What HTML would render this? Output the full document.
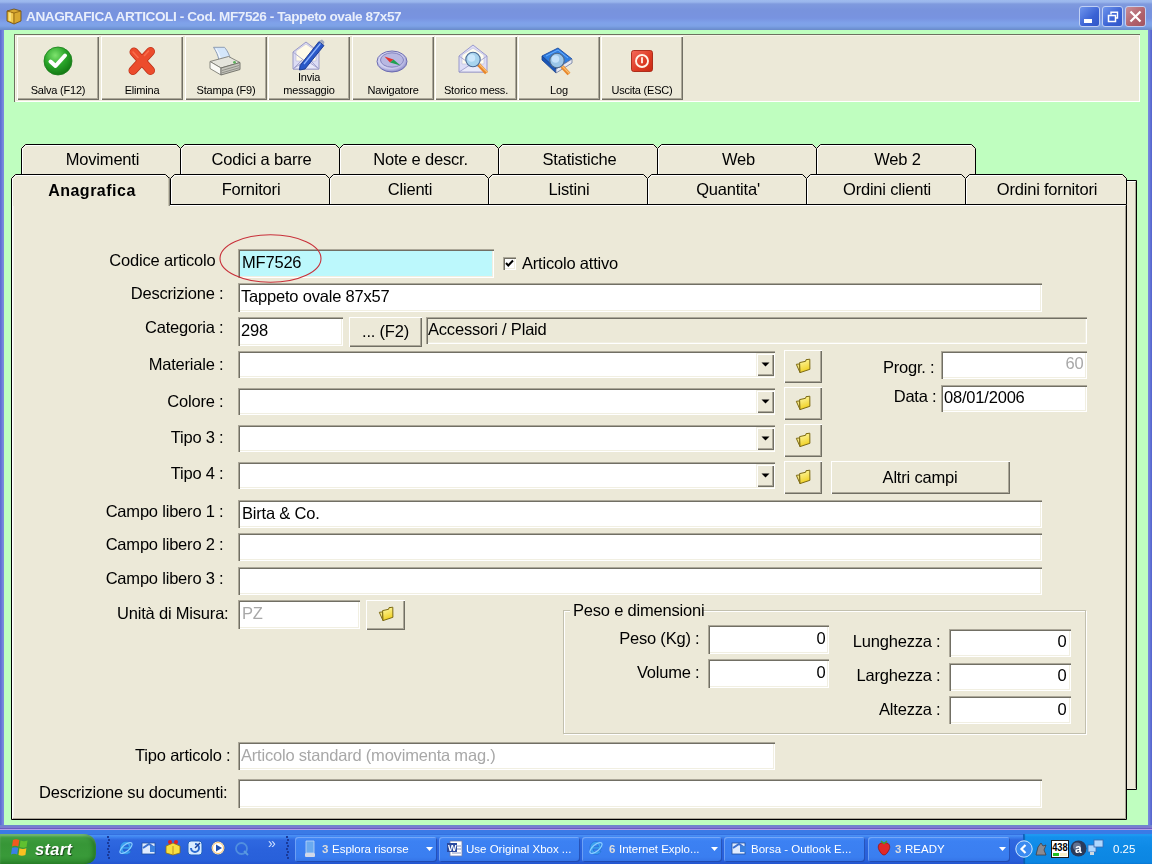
<!DOCTYPE html>
<html><head><meta charset="utf-8">
<style>
*{box-sizing:border-box;margin:0;padding:0}
html,body{width:1152px;height:864px;overflow:hidden;background:#bffebf;font-family:"Liberation Sans",sans-serif;color:#000}
.a{position:absolute}
.t{white-space:nowrap;line-height:20px;height:20px;transform:translateZ(0)}
svg{position:absolute;overflow:visible}
</style></head><body>
<div class="a" style="left:0px;top:0px;width:1152px;height:30px;background:linear-gradient(#9fbbee 0px,#9ab6ec 2px,#7f9ade 4px,#7893dd 10px,#7893e0 18px,#7fa2ea 23px,#7ea2e6 26px,#7196d8 28px,#6a8ac8 30px)"></div>
<svg style="left:4px;top:7px" width="20" height="18" viewBox="0 0 20 18">
<path d="M3 4 L10 2 L17 4 L17 14 L10 17 L3 14 Z" fill="#d8a830" stroke="#6a4a10" stroke-width="0.8"/>
<path d="M3 4 L10 6 L17 4" fill="none" stroke="#8a6010" stroke-width="0.8"/>
<path d="M10 6 L10 17" stroke="#8a6010" stroke-width="0.8"/>
<path d="M4 5 L9 6.5 L9 15.5 L4 13.5Z" fill="#f0c850"/>
<path d="M6 5.5 L6 14" stroke="#fff0a0" stroke-width="1.2"/>
</svg>
<div class="a t" style="left:26px;top:7.29px;font-size:13.6px;color:#e8eefb;font-weight:bold;letter-spacing:-0.42px;">ANAGRAFICA ARTICOLI - Cod. MF7526 - Tappeto ovale 87x57</div>
<div class="a" style="left:1079px;top:6px;width:21px;height:21px;background:linear-gradient(135deg,#6f95ec,#3a62d4 60%,#3157c8);border:1px solid #c0d0f4;border-radius:3px"></div>
<div class="a" style="left:1102px;top:6px;width:21px;height:21px;background:linear-gradient(135deg,#6f95ec,#3a62d4 60%,#3157c8);border:1px solid #c0d0f4;border-radius:3px"></div>
<div class="a" style="left:1125px;top:6px;width:21px;height:21px;background:linear-gradient(135deg,#c98f98,#b0616b 60%,#a25560);border:1px solid #c0d0f4;border-radius:3px"></div>
<div class="a" style="left:1084px;top:19px;width:8px;height:4px;background:#fff"></div>
<svg style="left:1102px;top:6px" width="21" height="21"><rect x="6.5" y="9.5" width="7" height="6" fill="none" stroke="#fff" stroke-width="1.5"/><path d="M9 8.5 V6.2 H15.5 V12 H14" fill="none" stroke="#fff" stroke-width="1.4"/></svg>
<svg style="left:1125px;top:6px" width="21" height="21"><path d="M5.5 5.5 L15.5 15.5 M15.5 5.5 L5.5 15.5" stroke="#fff" stroke-width="2.2"/></svg>
<div class="a" style="left:0px;top:30px;width:4px;height:800px;background:linear-gradient(90deg,#5868cf,#6b7cd9 2px,#7a8ade 3px)"></div>
<div class="a" style="left:1148px;top:30px;width:4px;height:800px;background:linear-gradient(90deg,#7a8ade,#6b7cd9 2px,#5868cf 3px)"></div>
<div class="a" style="left:0px;top:825px;width:1152px;height:5px;background:linear-gradient(#6c88cc 0px,#6c88cc 1px,#7c7cd0 1px,#7c7cd0 3px,#6a5cc0 3px,#6a5cc0 4px,#b0a0e8 4px)"></div>
<div class="a" style="left:14px;top:34px;width:1126px;height:68px;background:#ece9d8;box-shadow:inset 1px 1px 0 #6e7060,inset 2px 2px 0 #f6f4e6,inset -1px -1px 0 #fff"></div>
<div class="a" style="left:17px;top:36px;width:82px;height:64px;background:#ece9d8;box-shadow:inset 1px 1px 0 #fff,inset -1px -1px 0 #716f64,inset -2px -2px 0 #aca899"></div>
<div class="a t" style="left:-142px;width:400px;text-align:center;top:80.19px;font-size:11px;color:#000;font-weight:normal;letter-spacing:-0.2px;">Salva (F12)</div>
<div class="a" style="left:101px;top:36px;width:82px;height:64px;background:#ece9d8;box-shadow:inset 1px 1px 0 #fff,inset -1px -1px 0 #716f64,inset -2px -2px 0 #aca899"></div>
<div class="a t" style="left:-58px;width:400px;text-align:center;top:80.19px;font-size:11px;color:#000;font-weight:normal;letter-spacing:-0.2px;">Elimina</div>
<div class="a" style="left:185px;top:36px;width:82px;height:64px;background:#ece9d8;box-shadow:inset 1px 1px 0 #fff,inset -1px -1px 0 #716f64,inset -2px -2px 0 #aca899"></div>
<div class="a t" style="left:26px;width:400px;text-align:center;top:80.19px;font-size:11px;color:#000;font-weight:normal;letter-spacing:-0.2px;">Stampa (F9)</div>
<div class="a" style="left:268px;top:36px;width:82px;height:64px;background:#ece9d8;box-shadow:inset 1px 1px 0 #fff,inset -1px -1px 0 #716f64,inset -2px -2px 0 #aca899"></div>
<div class="a t" style="left:109px;width:400px;text-align:center;top:67.19px;font-size:11px;color:#000;font-weight:normal;letter-spacing:-0.2px;">Invia</div>
<div class="a t" style="left:109px;width:400px;text-align:center;top:80.19px;font-size:11px;color:#000;font-weight:normal;letter-spacing:-0.2px;">messaggio</div>
<div class="a" style="left:352px;top:36px;width:82px;height:64px;background:#ece9d8;box-shadow:inset 1px 1px 0 #fff,inset -1px -1px 0 #716f64,inset -2px -2px 0 #aca899"></div>
<div class="a t" style="left:193px;width:400px;text-align:center;top:80.19px;font-size:11px;color:#000;font-weight:normal;letter-spacing:-0.2px;">Navigatore</div>
<div class="a" style="left:435px;top:36px;width:82px;height:64px;background:#ece9d8;box-shadow:inset 1px 1px 0 #fff,inset -1px -1px 0 #716f64,inset -2px -2px 0 #aca899"></div>
<div class="a t" style="left:276px;width:400px;text-align:center;top:80.19px;font-size:11px;color:#000;font-weight:normal;letter-spacing:-0.2px;">Storico mess.</div>
<div class="a" style="left:518px;top:36px;width:82px;height:64px;background:#ece9d8;box-shadow:inset 1px 1px 0 #fff,inset -1px -1px 0 #716f64,inset -2px -2px 0 #aca899"></div>
<div class="a t" style="left:359px;width:400px;text-align:center;top:80.19px;font-size:11px;color:#000;font-weight:normal;letter-spacing:-0.2px;">Log</div>
<div class="a" style="left:601px;top:36px;width:82px;height:64px;background:#ece9d8;box-shadow:inset 1px 1px 0 #fff,inset -1px -1px 0 #716f64,inset -2px -2px 0 #aca899"></div>
<div class="a t" style="left:442px;width:400px;text-align:center;top:80.19px;font-size:11px;color:#000;font-weight:normal;letter-spacing:-0.2px;">Uscita (ESC)</div>
<svg style="left:43px;top:46px" width="30" height="30" viewBox="0 0 30 30">
<defs><radialGradient id="gg" cx="40%" cy="30%" r="70%"><stop offset="0" stop-color="#7ee36e"/><stop offset="0.55" stop-color="#2aa52a"/><stop offset="1" stop-color="#137a13"/></radialGradient></defs>
<circle cx="15" cy="15" r="14" fill="url(#gg)" stroke="#1b7d1b" stroke-width="0.8"/>
<path d="M7.5 15.5 L12.5 20 L22 9.5" fill="none" stroke="#fff" stroke-width="4" stroke-linejoin="round" stroke-linecap="round"/>
</svg>
<svg style="left:127px;top:46px" width="30" height="30" viewBox="0 0 30 30">
<path d="M7 6 L23.5 24.5 M23.5 5.5 L6 24.5" stroke="#b83018" stroke-width="9" stroke-linecap="round"/>
<path d="M7 6 L23.5 24.5 M23.5 5.5 L6 24.5" stroke="#ec4c2c" stroke-width="7.6" stroke-linecap="round"/>
<path d="M6 6 L11 11.5 M21.5 5 L17.5 9.5" stroke="#ff7a58" stroke-width="1.6" stroke-linecap="round" opacity="0.7"/>
</svg>
<svg style="left:209px;top:46px" width="32" height="30" viewBox="0 0 32 30">
<path d="M4.5 1.3 L15.5 1.3 C17 3 19 6 20.5 10 L21.5 13 L10 14.5 C9 9 7 5 4.5 1.3Z" fill="#d4e6fa" stroke="#8494ae" stroke-width="0.9"/>
<path d="M7 3 C9 6 10.5 9 11.5 13" fill="none" stroke="#f4f8ff" stroke-width="1.2"/>
<path d="M1 15.5 L19.5 10.5 L31 16.5 L12 22Z" fill="#e4e4dc" stroke="#7c7c74" stroke-width="0.9" stroke-linejoin="round"/>
<path d="M1 15.5 L12 22 L12 29 L1 22.5Z" fill="#fafaf6" stroke="#7c7c74" stroke-width="0.9" stroke-linejoin="round"/>
<path d="M12 22 L31 16.5 L31 23.5 L12 29Z" fill="#c4c4bc" stroke="#6c6c64" stroke-width="0.9" stroke-linejoin="round"/>
<path d="M13 24.5 L30 19.5 M13 26.8 L30 21.8" stroke="#8a8a82" stroke-width="0.9"/>
<circle cx="25.5" cy="16.3" r="1.4" fill="#5cb05c"/>
</svg>
<svg style="left:292px;top:39px" width="33" height="32" viewBox="0 0 33 32">
<path d="M1 13 L14 3 L27 13 L27 30 L1 30Z" fill="#dcdcf4" stroke="#9090c0" stroke-width="0.9"/>
<path d="M4 12 L14 5 L24 12 L24 22 L4 22Z" fill="#fffbe8" stroke="#b8b8d8" stroke-width="0.6"/>
<path d="M1 13 L14 23 L27 13 M1 30 L11 20 M27 30 L17 20" fill="none" stroke="#a0a0cc" stroke-width="0.9"/>
<path d="M1 30 L14 21 L27 30Z" fill="#e8e8f8" stroke="#9898c8" stroke-width="0.8"/>
<path d="M8 26.5 L27 2.5 L32 6.5 L13 30 L7.5 31Z" fill="#2a58c8" stroke="#17368a" stroke-width="0.9"/>
<path d="M12 25 L28.5 4.5" stroke="#8fb6ff" stroke-width="1.2"/>
<path d="M27 2 L30 0.5 L32.5 3 L31.5 5.5Z" fill="#a0a8c0"/>
</svg>
<svg style="left:376px;top:49px" width="32" height="24" viewBox="0 0 32 24">
<defs><radialGradient id="cg" cx="45%" cy="40%" r="60%"><stop offset="0" stop-color="#f4f4ff"/><stop offset="0.7" stop-color="#cfcff0"/><stop offset="1" stop-color="#8a8ac8"/></radialGradient></defs>
<ellipse cx="16" cy="12.5" rx="15" ry="10.5" fill="url(#cg)" stroke="#6c6cb0" stroke-width="1"/>
<ellipse cx="16" cy="11" rx="11.5" ry="7.2" fill="#b8b8e2" stroke="#7a7ab8" stroke-width="0.9"/>
<path d="M8.5 7.5 L17.5 10.5 L14 13.5Z" fill="#e8302a"/>
<path d="M17.5 10.5 L24.5 16.5 L14 13.5Z" fill="#20a050"/>
</svg>
<svg style="left:458px;top:44px" width="34" height="33" viewBox="0 0 34 33">
<path d="M1 12 L15 1 L29 12 L29 28 L1 28Z" fill="#dedef6" stroke="#9090c8" stroke-width="0.9"/>
<path d="M4 11 L15 4 L26 11 L26 20 L4 20Z" fill="#fffdf0" stroke="#b8b8d8" stroke-width="0.6"/>
<path d="M1 12 L15 22 L29 12" fill="none" stroke="#a0a0cc" stroke-width="0.9"/>
<path d="M1 28 L15 19 L29 28Z" fill="#eaeaf8" stroke="#9898c8" stroke-width="0.8"/>
<path d="M20.5 20.5 L28.5 29" stroke="#e8862a" stroke-width="4" stroke-linecap="butt"/>
<path d="M21 20 L29.5 28.5" stroke="#f8c070" stroke-width="1.3"/>
<circle cx="15" cy="15.5" r="7.2" fill="#a8d4ee" stroke="#4a6a94" stroke-width="1.1"/>
<circle cx="13.5" cy="14" r="3.8" fill="#d4ecff" opacity="0.8"/>
</svg>
<svg style="left:541px;top:47px" width="36" height="30" viewBox="0 0 36 30">
<path d="M1 9 L17 1 L31 12 L15 22Z" fill="#2e7de0" stroke="#1a4aa0" stroke-width="0.9"/>
<path d="M1 9 L1 13 L15 26 L15 22Z" fill="#1a56b8" stroke="#16408a" stroke-width="0.8"/>
<path d="M15 22 L31 12 L31 16 L15 26Z" fill="#e8e8f0" stroke="#6a7aa0" stroke-width="0.8"/>
<path d="M5 9 L17 3 L27 11" fill="none" stroke="#6ab0ff" stroke-width="1"/>
<path d="M21 19.5 L28 27" stroke="#e8862a" stroke-width="4" stroke-linecap="butt"/>
<path d="M21 19 L28.5 26.5" stroke="#f8c070" stroke-width="1.2"/>
<circle cx="16" cy="13.5" r="7.2" fill="#9cc6e8" stroke="#506a8a" stroke-width="1.1"/>
<circle cx="14.5" cy="12" r="3.8" fill="#d0e8ff" opacity="0.8"/>
</svg>
<svg style="left:631px;top:50px" width="22" height="22" viewBox="0 0 22 22">
<defs><linearGradient id="rg" x1="0" y1="0" x2="1" y2="1"><stop offset="0" stop-color="#f46a5a"/><stop offset="0.6" stop-color="#dc3a22"/><stop offset="1" stop-color="#c82a14"/></linearGradient></defs>
<rect x="0.5" y="0.5" width="21" height="21" rx="2.2" fill="url(#rg)" stroke="#a82412" stroke-width="0.9"/>
<circle cx="11" cy="11" r="6" fill="none" stroke="#fff4e8" stroke-width="1.9"/>
<path d="M11 7.3 V13.3" stroke="#fff4e8" stroke-width="1.8"/>
</svg>
<svg style="left:0;top:0" width="1152" height="864" viewBox="0 0 1152 864"><rect x="1126" y="180" width="11" height="610" fill="#ece9d8"/><path d="M1126 180.5 H1136.5 V789.5 H1126" fill="none" stroke="#000"/><path d="M1127 181.5 H1135" stroke="#fff"/><path d="M1135.5 182 V788" stroke="#aca899"/><path d="M21 180 L21 148 L25 144 L177 144 L181 148 L181 180Z" fill="#ece9d8"/><path d="M21.5 180 L21.5 148.5 L25.5 144.5 L176.5 144.5 L180.5 148.5 L180.5 180" fill="none" stroke="#000" stroke-width="1"/><path d="M22.5 180 L22.5 149 L26 145.5 L176 145.5" fill="none" stroke="#fff" stroke-width="1"/><path d="M180 180 L180 148 L184 144 L336 144 L340 148 L340 180Z" fill="#ece9d8"/><path d="M180.5 180 L180.5 148.5 L184.5 144.5 L335.5 144.5 L339.5 148.5 L339.5 180" fill="none" stroke="#000" stroke-width="1"/><path d="M181.5 180 L181.5 149 L185 145.5 L335 145.5" fill="none" stroke="#fff" stroke-width="1"/><path d="M339 180 L339 148 L343 144 L495 144 L499 148 L499 180Z" fill="#ece9d8"/><path d="M339.5 180 L339.5 148.5 L343.5 144.5 L494.5 144.5 L498.5 148.5 L498.5 180" fill="none" stroke="#000" stroke-width="1"/><path d="M340.5 180 L340.5 149 L344 145.5 L494 145.5" fill="none" stroke="#fff" stroke-width="1"/><path d="M498 180 L498 148 L502 144 L654 144 L658 148 L658 180Z" fill="#ece9d8"/><path d="M498.5 180 L498.5 148.5 L502.5 144.5 L653.5 144.5 L657.5 148.5 L657.5 180" fill="none" stroke="#000" stroke-width="1"/><path d="M499.5 180 L499.5 149 L503 145.5 L653 145.5" fill="none" stroke="#fff" stroke-width="1"/><path d="M657 180 L657 148 L661 144 L813 144 L817 148 L817 180Z" fill="#ece9d8"/><path d="M657.5 180 L657.5 148.5 L661.5 144.5 L812.5 144.5 L816.5 148.5 L816.5 180" fill="none" stroke="#000" stroke-width="1"/><path d="M658.5 180 L658.5 149 L662 145.5 L812 145.5" fill="none" stroke="#fff" stroke-width="1"/><path d="M816 180 L816 148 L820 144 L972 144 L976 148 L976 180Z" fill="#ece9d8"/><path d="M816.5 180 L816.5 148.5 L820.5 144.5 L971.5 144.5 L975.5 148.5 L975.5 180" fill="none" stroke="#000" stroke-width="1"/><path d="M817.5 180 L817.5 149 L821 145.5 L971 145.5" fill="none" stroke="#fff" stroke-width="1"/><path d="M170 205 L170 178 L174 174 L326 174 L330 178 L330 205Z" fill="#ece9d8"/><path d="M170.5 205 L170.5 178.5 L174.5 174.5 L325.5 174.5 L329.5 178.5 L329.5 205" fill="none" stroke="#000" stroke-width="1"/><path d="M171.5 205 L171.5 179 L175 175.5 L325 175.5" fill="none" stroke="#fff" stroke-width="1"/><path d="M329 205 L329 178 L333 174 L485 174 L489 178 L489 205Z" fill="#ece9d8"/><path d="M329.5 205 L329.5 178.5 L333.5 174.5 L484.5 174.5 L488.5 178.5 L488.5 205" fill="none" stroke="#000" stroke-width="1"/><path d="M330.5 205 L330.5 179 L334 175.5 L484 175.5" fill="none" stroke="#fff" stroke-width="1"/><path d="M488 205 L488 178 L492 174 L644 174 L648 178 L648 205Z" fill="#ece9d8"/><path d="M488.5 205 L488.5 178.5 L492.5 174.5 L643.5 174.5 L647.5 178.5 L647.5 205" fill="none" stroke="#000" stroke-width="1"/><path d="M489.5 205 L489.5 179 L493 175.5 L643 175.5" fill="none" stroke="#fff" stroke-width="1"/><path d="M647 205 L647 178 L651 174 L803 174 L807 178 L807 205Z" fill="#ece9d8"/><path d="M647.5 205 L647.5 178.5 L651.5 174.5 L802.5 174.5 L806.5 178.5 L806.5 205" fill="none" stroke="#000" stroke-width="1"/><path d="M648.5 205 L648.5 179 L652 175.5 L802 175.5" fill="none" stroke="#fff" stroke-width="1"/><path d="M806 205 L806 178 L810 174 L962 174 L966 178 L966 205Z" fill="#ece9d8"/><path d="M806.5 205 L806.5 178.5 L810.5 174.5 L961.5 174.5 L965.5 178.5 L965.5 205" fill="none" stroke="#000" stroke-width="1"/><path d="M807.5 205 L807.5 179 L811 175.5 L961 175.5" fill="none" stroke="#fff" stroke-width="1"/><path d="M965 205 L965 178 L969 174 L1123 174 L1127 178 L1127 205Z" fill="#ece9d8"/><path d="M965.5 205 L965.5 178.5 L969.5 174.5 L1122.5 174.5 L1126.5 178.5 L1126.5 205" fill="none" stroke="#000" stroke-width="1"/><path d="M966.5 205 L966.5 179 L970 175.5 L1122 175.5" fill="none" stroke="#fff" stroke-width="1"/><rect x="11" y="204" width="1116" height="616" fill="#ece9d8"/><path d="M11.5 204 V819.5 H1126.5 V204.5 H170" fill="none" stroke="#000"/><path d="M12.5 205 V818 M170 205.5 H1125" stroke="#fff"/><path d="M13.5 206 V817" stroke="#f6f4ec"/><path d="M1125.5 206 V818.5 H13" fill="none" stroke="#aca899"/><path d="M11 206 L11 178 L15 174 L166 174 L170 178 L170 206Z" fill="#ece9d8"/><path d="M11.5 206 L11.5 178.5 L15.5 174.5 L165.5 174.5 L169.5 178.5" fill="none" stroke="#000"/><path d="M12.5 206 L12.5 179 L16 175.5 L165 175.5" fill="none" stroke="#fff"/><path d="M168.5 178 L168.5 206" fill="none" stroke="#c8c4b0"/><path d="M169.5 177 L169.5 206" fill="none" stroke="#8a887c"/></svg>
<div class="a t" style="left:-97.5px;width:400px;text-align:center;top:149.28px;font-size:16.5px;color:#000;font-weight:normal;letter-spacing:-0.2px;">Movimenti</div>
<div class="a t" style="left:61.5px;width:400px;text-align:center;top:149.28px;font-size:16.5px;color:#000;font-weight:normal;letter-spacing:-0.2px;">Codici a barre</div>
<div class="a t" style="left:220.5px;width:400px;text-align:center;top:149.28px;font-size:16.5px;color:#000;font-weight:normal;letter-spacing:-0.2px;">Note e descr.</div>
<div class="a t" style="left:379.5px;width:400px;text-align:center;top:149.28px;font-size:16.5px;color:#000;font-weight:normal;letter-spacing:-0.2px;">Statistiche</div>
<div class="a t" style="left:538.5px;width:400px;text-align:center;top:149.28px;font-size:16.5px;color:#000;font-weight:normal;letter-spacing:-0.2px;">Web</div>
<div class="a t" style="left:697.5px;width:400px;text-align:center;top:149.28px;font-size:16.5px;color:#000;font-weight:normal;letter-spacing:-0.2px;">Web 2</div>
<div class="a t" style="left:-108.0px;width:400px;text-align:center;top:181.46px;font-size:16px;color:#000;font-weight:bold;letter-spacing:0.5px;">Anagrafica</div>
<div class="a t" style="left:51.0px;width:400px;text-align:center;top:179.28px;font-size:16.5px;color:#000;font-weight:normal;letter-spacing:-0.2px;">Fornitori</div>
<div class="a t" style="left:210.0px;width:400px;text-align:center;top:179.28px;font-size:16.5px;color:#000;font-weight:normal;letter-spacing:-0.2px;">Clienti</div>
<div class="a t" style="left:369.0px;width:400px;text-align:center;top:179.28px;font-size:16.5px;color:#000;font-weight:normal;letter-spacing:-0.2px;">Listini</div>
<div class="a t" style="left:528.0px;width:400px;text-align:center;top:179.28px;font-size:16.5px;color:#000;font-weight:normal;letter-spacing:-0.2px;">Quantita'</div>
<div class="a t" style="left:687.0px;width:400px;text-align:center;top:179.28px;font-size:16.5px;color:#000;font-weight:normal;letter-spacing:-0.2px;">Ordini clienti</div>
<div class="a t" style="left:847.0px;width:400px;text-align:center;top:179.28px;font-size:16.5px;color:#000;font-weight:normal;letter-spacing:-0.2px;">Ordini fornitori</div>
<div class="a t" style="right:936.5px;top:250.28px;font-size:16.5px;color:#000;font-weight:normal;letter-spacing:-0.2px;">Codice articolo</div>
<div class="a" style="left:238px;top:249px;width:256px;height:29px;background:#bcf8fc;box-shadow:inset 1px 1px 0 #aca899,inset 2px 2px 0 #716f64,inset -1px -1px 0 #fff,inset -2px -2px 0 #f1efe2;"></div>
<div class="a t" style="left:242px;top:252.28px;font-size:16.5px;color:#000;font-weight:normal;letter-spacing:-0.2px;">MF7526</div>
<svg style="left:218px;top:232px" width="106" height="54"><ellipse cx="52.5" cy="26.5" rx="50.5" ry="23.8" fill="none" stroke="#c8303a" stroke-width="1.1"/></svg>
<div class="a" style="left:503px;top:257px;width:13px;height:13px;background:#fff;box-shadow:inset 1px 1px 0 #aca899,inset 2px 2px 0 #716f64,inset -1px -1px 0 #fff,inset -2px -2px 0 #f1efe2"></div>
<svg style="left:503px;top:257px" width="13" height="13"><path d="M3 6 L5.3 8.5 L10 3.5" fill="none" stroke="#000" stroke-width="2"/></svg>
<div class="a t" style="left:522px;top:253.28px;font-size:16.5px;color:#000;font-weight:normal;letter-spacing:-0.2px;">Articolo attivo</div>
<div class="a t" style="right:928.5px;top:283.28px;font-size:16.5px;color:#000;font-weight:normal;letter-spacing:-0.2px;">Descrizione :</div>
<div class="a" style="left:238px;top:283px;width:804px;height:29px;background:#fff;box-shadow:inset 1px 1px 0 #aca899,inset 2px 2px 0 #716f64,inset -1px -1px 0 #fff,inset -2px -2px 0 #f1efe2;"></div>
<div class="a t" style="left:241px;top:286.28px;font-size:16.5px;color:#000;font-weight:normal;letter-spacing:-0.2px;">Tappeto ovale 87x57</div>
<div class="a t" style="right:928.5px;top:317.28px;font-size:16.5px;color:#000;font-weight:normal;letter-spacing:-0.2px;">Categoria :</div>
<div class="a" style="left:238px;top:317px;width:105px;height:29px;background:#fff;box-shadow:inset 1px 1px 0 #aca899,inset 2px 2px 0 #716f64,inset -1px -1px 0 #fff,inset -2px -2px 0 #f1efe2;"></div>
<div class="a t" style="left:241px;top:320.28px;font-size:16.5px;color:#000;font-weight:normal;letter-spacing:-0.2px;">298</div>
<div class="a" style="left:349px;top:317px;width:73px;height:30px;background:#ece9d8;box-shadow:inset 1px 1px 0 #fff,inset -1px -1px 0 #716f64,inset -2px -2px 0 #aca899"></div>
<div class="a t" style="left:185.5px;width:400px;text-align:center;top:321.28px;font-size:16.5px;color:#000;font-weight:normal;letter-spacing:-0.2px;">... (F2)</div>
<div class="a" style="left:426px;top:317px;width:661px;height:27px;background:#ece9d8;box-shadow:inset 1px 1px 0 #aca899,inset 2px 2px 0 #716f64,inset -1px -1px 0 #fff,inset -2px -2px 0 #f1efe2;"></div>
<div class="a t" style="left:428px;top:319.28px;font-size:16.5px;color:#000;font-weight:normal;letter-spacing:-0.2px;">Accessori / Plaid</div>
<div class="a t" style="right:928.5px;top:354.28px;font-size:16.5px;color:#000;font-weight:normal;letter-spacing:-0.2px;">Materiale :</div>
<div class="a" style="left:238px;top:351px;width:537px;height:27px;background:#fff;box-shadow:inset 1px 1px 0 #aca899,inset 2px 2px 0 #716f64,inset -1px -1px 0 #fff,inset -2px -2px 0 #f1efe2;"></div>
<div class="a" style="left:756px;top:353px;width:18px;height:23px;background:#ece9d8;box-shadow:inset 1px 1px 0 #f1efe2,inset 2px 2px 0 #fff,inset -1px -1px 0 #716f64,inset -2px -2px 0 #aca899"></div>
<svg style="left:760.5px;top:362.0px" width="9" height="5"><path d="M0.5 0.5 H8.5 L4.5 4.5Z" fill="#000"/></svg>
<div class="a" style="left:784px;top:350px;width:38px;height:33px;background:#ece9d8;box-shadow:inset 1px 1px 0 #fff,inset -1px -1px 0 #716f64,inset -2px -2px 0 #aca899"></div>
<svg style="left:792.0px;top:354.5px" width="22" height="22" viewBox="0 0 22 22">
<defs><linearGradient id="fy" x1="0" y1="0" x2="0.3" y2="1"><stop offset="0" stop-color="#fffbb0"/><stop offset="1" stop-color="#f0d020"/></linearGradient></defs>
<path d="M4.3 9.3 L7.6 8.9 L8 17.6 Z" fill="#f4e680" stroke="#7d6a12" stroke-width="1"/>
<path d="M7.6 7.6 L13.6 6.3 L14 4.7 L17.8 4.2 L17.9 14.3 L8 17.6 Z" fill="url(#fy)" stroke="#7d6a12" stroke-width="1"/>
</svg>
<div class="a t" style="right:928.5px;top:391.28px;font-size:16.5px;color:#000;font-weight:normal;letter-spacing:-0.2px;">Colore :</div>
<div class="a" style="left:238px;top:388px;width:537px;height:27px;background:#fff;box-shadow:inset 1px 1px 0 #aca899,inset 2px 2px 0 #716f64,inset -1px -1px 0 #fff,inset -2px -2px 0 #f1efe2;"></div>
<div class="a" style="left:756px;top:390px;width:18px;height:23px;background:#ece9d8;box-shadow:inset 1px 1px 0 #f1efe2,inset 2px 2px 0 #fff,inset -1px -1px 0 #716f64,inset -2px -2px 0 #aca899"></div>
<svg style="left:760.5px;top:399.0px" width="9" height="5"><path d="M0.5 0.5 H8.5 L4.5 4.5Z" fill="#000"/></svg>
<div class="a" style="left:784px;top:387px;width:38px;height:33px;background:#ece9d8;box-shadow:inset 1px 1px 0 #fff,inset -1px -1px 0 #716f64,inset -2px -2px 0 #aca899"></div>
<svg style="left:792.0px;top:391.5px" width="22" height="22" viewBox="0 0 22 22">
<defs><linearGradient id="fy" x1="0" y1="0" x2="0.3" y2="1"><stop offset="0" stop-color="#fffbb0"/><stop offset="1" stop-color="#f0d020"/></linearGradient></defs>
<path d="M4.3 9.3 L7.6 8.9 L8 17.6 Z" fill="#f4e680" stroke="#7d6a12" stroke-width="1"/>
<path d="M7.6 7.6 L13.6 6.3 L14 4.7 L17.8 4.2 L17.9 14.3 L8 17.6 Z" fill="url(#fy)" stroke="#7d6a12" stroke-width="1"/>
</svg>
<div class="a t" style="right:928.5px;top:427.28px;font-size:16.5px;color:#000;font-weight:normal;letter-spacing:-0.2px;">Tipo 3 :</div>
<div class="a" style="left:238px;top:425px;width:537px;height:27px;background:#fff;box-shadow:inset 1px 1px 0 #aca899,inset 2px 2px 0 #716f64,inset -1px -1px 0 #fff,inset -2px -2px 0 #f1efe2;"></div>
<div class="a" style="left:756px;top:427px;width:18px;height:23px;background:#ece9d8;box-shadow:inset 1px 1px 0 #f1efe2,inset 2px 2px 0 #fff,inset -1px -1px 0 #716f64,inset -2px -2px 0 #aca899"></div>
<svg style="left:760.5px;top:436.0px" width="9" height="5"><path d="M0.5 0.5 H8.5 L4.5 4.5Z" fill="#000"/></svg>
<div class="a" style="left:784px;top:424px;width:38px;height:33px;background:#ece9d8;box-shadow:inset 1px 1px 0 #fff,inset -1px -1px 0 #716f64,inset -2px -2px 0 #aca899"></div>
<svg style="left:792.0px;top:428.5px" width="22" height="22" viewBox="0 0 22 22">
<defs><linearGradient id="fy" x1="0" y1="0" x2="0.3" y2="1"><stop offset="0" stop-color="#fffbb0"/><stop offset="1" stop-color="#f0d020"/></linearGradient></defs>
<path d="M4.3 9.3 L7.6 8.9 L8 17.6 Z" fill="#f4e680" stroke="#7d6a12" stroke-width="1"/>
<path d="M7.6 7.6 L13.6 6.3 L14 4.7 L17.8 4.2 L17.9 14.3 L8 17.6 Z" fill="url(#fy)" stroke="#7d6a12" stroke-width="1"/>
</svg>
<div class="a t" style="right:928.5px;top:463.28px;font-size:16.5px;color:#000;font-weight:normal;letter-spacing:-0.2px;">Tipo 4 :</div>
<div class="a" style="left:238px;top:462px;width:537px;height:27px;background:#fff;box-shadow:inset 1px 1px 0 #aca899,inset 2px 2px 0 #716f64,inset -1px -1px 0 #fff,inset -2px -2px 0 #f1efe2;"></div>
<div class="a" style="left:756px;top:464px;width:18px;height:23px;background:#ece9d8;box-shadow:inset 1px 1px 0 #f1efe2,inset 2px 2px 0 #fff,inset -1px -1px 0 #716f64,inset -2px -2px 0 #aca899"></div>
<svg style="left:760.5px;top:473.0px" width="9" height="5"><path d="M0.5 0.5 H8.5 L4.5 4.5Z" fill="#000"/></svg>
<div class="a" style="left:784px;top:461px;width:38px;height:33px;background:#ece9d8;box-shadow:inset 1px 1px 0 #fff,inset -1px -1px 0 #716f64,inset -2px -2px 0 #aca899"></div>
<svg style="left:792.0px;top:465.5px" width="22" height="22" viewBox="0 0 22 22">
<defs><linearGradient id="fy" x1="0" y1="0" x2="0.3" y2="1"><stop offset="0" stop-color="#fffbb0"/><stop offset="1" stop-color="#f0d020"/></linearGradient></defs>
<path d="M4.3 9.3 L7.6 8.9 L8 17.6 Z" fill="#f4e680" stroke="#7d6a12" stroke-width="1"/>
<path d="M7.6 7.6 L13.6 6.3 L14 4.7 L17.8 4.2 L17.9 14.3 L8 17.6 Z" fill="url(#fy)" stroke="#7d6a12" stroke-width="1"/>
</svg>
<div class="a t" style="right:217.5px;top:357.28px;font-size:16.5px;color:#000;font-weight:normal;letter-spacing:-0.2px;">Progr. :</div>
<div class="a" style="left:941px;top:351px;width:146px;height:28px;background:#fff;box-shadow:inset 1px 1px 0 #aca899,inset 2px 2px 0 #716f64,inset -1px -1px 0 #fff,inset -2px -2px 0 #f1efe2;"></div>
<div class="a t" style="right:68.5px;top:353.28px;font-size:16.5px;color:#a8a8a8;font-weight:normal;letter-spacing:-0.2px;">60</div>
<div class="a t" style="right:215.5px;top:386.28px;font-size:16.5px;color:#000;font-weight:normal;letter-spacing:-0.2px;">Data :</div>
<div class="a" style="left:941px;top:385px;width:146px;height:27px;background:#fff;box-shadow:inset 1px 1px 0 #aca899,inset 2px 2px 0 #716f64,inset -1px -1px 0 #fff,inset -2px -2px 0 #f1efe2;"></div>
<div class="a t" style="left:944px;top:387.28px;font-size:16.5px;color:#000;font-weight:normal;letter-spacing:-0.2px;">08/01/2006</div>
<div class="a" style="left:831px;top:461px;width:179px;height:33px;background:#ece9d8;box-shadow:inset 1px 1px 0 #fff,inset -1px -1px 0 #716f64,inset -2px -2px 0 #aca899"></div>
<div class="a t" style="left:720px;width:400px;text-align:center;top:467.28px;font-size:16.5px;color:#000;font-weight:normal;letter-spacing:-0.2px;">Altri campi</div>
<div class="a t" style="right:928.5px;top:501.28px;font-size:16.5px;color:#000;font-weight:normal;letter-spacing:-0.2px;">Campo libero 1 :</div>
<div class="a" style="left:238px;top:500px;width:804px;height:28px;background:#fff;box-shadow:inset 1px 1px 0 #aca899,inset 2px 2px 0 #716f64,inset -1px -1px 0 #fff,inset -2px -2px 0 #f1efe2;"></div>
<div class="a t" style="right:928.5px;top:534.28px;font-size:16.5px;color:#000;font-weight:normal;letter-spacing:-0.2px;">Campo libero 2 :</div>
<div class="a" style="left:238px;top:533px;width:804px;height:28px;background:#fff;box-shadow:inset 1px 1px 0 #aca899,inset 2px 2px 0 #716f64,inset -1px -1px 0 #fff,inset -2px -2px 0 #f1efe2;"></div>
<div class="a t" style="right:928.5px;top:568.28px;font-size:16.5px;color:#000;font-weight:normal;letter-spacing:-0.2px;">Campo libero 3 :</div>
<div class="a" style="left:238px;top:567px;width:804px;height:28px;background:#fff;box-shadow:inset 1px 1px 0 #aca899,inset 2px 2px 0 #716f64,inset -1px -1px 0 #fff,inset -2px -2px 0 #f1efe2;"></div>
<div class="a t" style="left:242px;top:503.28px;font-size:16.5px;color:#000;font-weight:normal;letter-spacing:-0.2px;">Birta &amp; Co.</div>
<div class="a t" style="right:923.5px;top:603.28px;font-size:16.5px;color:#000;font-weight:normal;letter-spacing:-0.2px;">Unità di Misura:</div>
<div class="a" style="left:238px;top:600px;width:122px;height:29px;background:#fff;box-shadow:inset 1px 1px 0 #aca899,inset 2px 2px 0 #716f64,inset -1px -1px 0 #fff,inset -2px -2px 0 #f1efe2;"></div>
<div class="a t" style="left:242px;top:603.28px;font-size:16.5px;color:#a8a8a8;font-weight:normal;letter-spacing:-0.2px;">PZ</div>
<div class="a" style="left:366px;top:600px;width:39px;height:30px;background:#ece9d8;box-shadow:inset 1px 1px 0 #fff,inset -1px -1px 0 #716f64,inset -2px -2px 0 #aca899"></div>
<svg style="left:374.5px;top:603.0px" width="22" height="22" viewBox="0 0 22 22">
<defs><linearGradient id="fy" x1="0" y1="0" x2="0.3" y2="1"><stop offset="0" stop-color="#fffbb0"/><stop offset="1" stop-color="#f0d020"/></linearGradient></defs>
<path d="M4.3 9.3 L7.6 8.9 L8 17.6 Z" fill="#f4e680" stroke="#7d6a12" stroke-width="1"/>
<path d="M7.6 7.6 L13.6 6.3 L14 4.7 L17.8 4.2 L17.9 14.3 L8 17.6 Z" fill="url(#fy)" stroke="#7d6a12" stroke-width="1"/>
</svg>
<div class="a" style="left:563px;top:610px;width:523px;height:124px;border:1px solid #c2c0ae;box-shadow:1px 1px 0 #fff inset, 1px 1px 0 #fff"></div>
<div class="a" style="left:570px;top:603px;width:133px;height:13px;background:#ece9d8"></div>
<div class="a t" style="left:573px;top:600.28px;font-size:16.5px;color:#000;font-weight:normal;letter-spacing:-0.2px;">Peso e dimensioni</div>
<div class="a t" style="right:452.5px;top:628.28px;font-size:16.5px;color:#000;font-weight:normal;letter-spacing:-0.2px;">Peso (Kg) :</div>
<div class="a" style="left:708px;top:625px;width:121px;height:29px;background:#fff;box-shadow:inset 1px 1px 0 #aca899,inset 2px 2px 0 #716f64,inset -1px -1px 0 #fff,inset -2px -2px 0 #f1efe2;"></div>
<div class="a t" style="right:326.5px;top:627.78px;font-size:16.5px;color:#000;font-weight:normal;letter-spacing:-0.2px;">0</div>
<div class="a t" style="right:452.5px;top:662.28px;font-size:16.5px;color:#000;font-weight:normal;letter-spacing:-0.2px;">Volume :</div>
<div class="a" style="left:708px;top:659px;width:121px;height:29px;background:#fff;box-shadow:inset 1px 1px 0 #aca899,inset 2px 2px 0 #716f64,inset -1px -1px 0 #fff,inset -2px -2px 0 #f1efe2;"></div>
<div class="a t" style="right:326.5px;top:661.78px;font-size:16.5px;color:#000;font-weight:normal;letter-spacing:-0.2px;">0</div>
<div class="a t" style="right:211.5px;top:631.28px;font-size:16.5px;color:#000;font-weight:normal;letter-spacing:-0.2px;">Lunghezza :</div>
<div class="a" style="left:949px;top:629px;width:122px;height:28px;background:#fff;box-shadow:inset 1px 1px 0 #aca899,inset 2px 2px 0 #716f64,inset -1px -1px 0 #fff,inset -2px -2px 0 #f1efe2;"></div>
<div class="a t" style="right:85.5px;top:631.28px;font-size:16.5px;color:#000;font-weight:normal;letter-spacing:-0.2px;">0</div>
<div class="a t" style="right:211.5px;top:665.28px;font-size:16.5px;color:#000;font-weight:normal;letter-spacing:-0.2px;">Larghezza :</div>
<div class="a" style="left:949px;top:663px;width:122px;height:28px;background:#fff;box-shadow:inset 1px 1px 0 #aca899,inset 2px 2px 0 #716f64,inset -1px -1px 0 #fff,inset -2px -2px 0 #f1efe2;"></div>
<div class="a t" style="right:85.5px;top:665.28px;font-size:16.5px;color:#000;font-weight:normal;letter-spacing:-0.2px;">0</div>
<div class="a t" style="right:211.5px;top:699.28px;font-size:16.5px;color:#000;font-weight:normal;letter-spacing:-0.2px;">Altezza :</div>
<div class="a" style="left:949px;top:696px;width:122px;height:28px;background:#fff;box-shadow:inset 1px 1px 0 #aca899,inset 2px 2px 0 #716f64,inset -1px -1px 0 #fff,inset -2px -2px 0 #f1efe2;"></div>
<div class="a t" style="right:85.5px;top:699.28px;font-size:16.5px;color:#000;font-weight:normal;letter-spacing:-0.2px;">0</div>
<div class="a t" style="right:921.5px;top:745.28px;font-size:16.5px;color:#000;font-weight:normal;letter-spacing:-0.2px;">Tipo articolo :</div>
<div class="a" style="left:238px;top:742px;width:537px;height:28px;background:#fff;box-shadow:inset 1px 1px 0 #aca899,inset 2px 2px 0 #716f64,inset -1px -1px 0 #fff,inset -2px -2px 0 #f1efe2;"></div>
<div class="a t" style="left:241px;top:745.28px;font-size:16.5px;color:#a8a8a8;font-weight:normal;letter-spacing:-0.2px;">Articolo standard (movimenta mag.)</div>
<div class="a t" style="right:924.5px;top:782.28px;font-size:16.5px;color:#000;font-weight:normal;letter-spacing:-0.2px;">Descrizione su documenti:</div>
<div class="a" style="left:238px;top:779px;width:804px;height:29px;background:#fff;box-shadow:inset 1px 1px 0 #aca899,inset 2px 2px 0 #716f64,inset -1px -1px 0 #fff,inset -2px -2px 0 #f1efe2;"></div>
<div class="a" style="left:0px;top:830px;width:1152px;height:34px;background:linear-gradient(#3a7ae6 0px,#3a7ae6 4px,#3470e0 4px,#3470e0 5px,#4c92f6 5px,#3f84f0 7px,#2f68e0 10px,#2a62dc 20px,#2860da 30px,#2456d0 34px)"></div>
<div class="a" style="left:0;top:834px;width:96px;height:30px;border-radius:0 12px 10px 0;background:linear-gradient(#5fb85f 0px,#3f9d3f 4px,#379637 10px,#399a39 22px,#2f8a2f 30px,#2a7a2a 34px);box-shadow:inset -3px 0 4px rgba(0,60,0,0.35), inset 0 2px 2px rgba(255,255,255,0.25)"></div>
<svg style="left:10px;top:838px" width="20" height="19" viewBox="0 0 20 19">
<path d="M3 2 Q6 0.5 9.3 2 L8.3 8.5 Q5 7.2 2 8.5Z" fill="#f05a20"/>
<path d="M10.5 2.5 Q14 4 17.5 2.5 L16.5 9 Q13.5 10.5 9.6 9Z" fill="#60c030"/>
<path d="M2 9.8 Q5 8.5 8.2 9.8 L7.2 16.5 Q4 15 1 16.5Z" fill="#3a80e8"/>
<path d="M9.4 10.3 Q13 11.8 16.4 10.3 L15.4 17 Q12 18.5 8.5 17Z" fill="#f8c020"/>
</svg>
<div class="a t" style="left:35px;top:839.28px;font-size:16.5px;color:#fff;font-weight:bold;font-style:italic;text-shadow:1px 1px 1px #1a4a1a;letter-spacing:0.3px;">start</div>
<svg style="left:107px;top:835px" width="4" height="26"><rect x="0" y="1" width="2" height="2" fill="#1a3a9a"/><rect x="1" y="4" width="2" height="2" fill="#1a3a9a"/><rect x="0" y="7" width="2" height="2" fill="#1a3a9a"/><rect x="1" y="10" width="2" height="2" fill="#1a3a9a"/><rect x="0" y="13" width="2" height="2" fill="#1a3a9a"/><rect x="1" y="16" width="2" height="2" fill="#1a3a9a"/><rect x="0" y="19" width="2" height="2" fill="#1a3a9a"/><rect x="1" y="22" width="2" height="2" fill="#1a3a9a"/></svg>
<svg style="left:286px;top:835px" width="4" height="26"><rect x="0" y="1" width="2" height="2" fill="#1a3a9a"/><rect x="1" y="4" width="2" height="2" fill="#1a3a9a"/><rect x="0" y="7" width="2" height="2" fill="#1a3a9a"/><rect x="1" y="10" width="2" height="2" fill="#1a3a9a"/><rect x="0" y="13" width="2" height="2" fill="#1a3a9a"/><rect x="1" y="16" width="2" height="2" fill="#1a3a9a"/><rect x="0" y="19" width="2" height="2" fill="#1a3a9a"/><rect x="1" y="22" width="2" height="2" fill="#1a3a9a"/></svg>
<svg style="left:118px;top:840px" width="16" height="16" viewBox="0 0 16 16"><path d="M13 6.5 C13 3.5 10.8 1.5 8 1.5 C4.5 1.5 2 4.5 2 8 C2 11.5 4.5 14.5 8 14.5 C10.5 14.5 12.3 13 13 11 L10 11 C9.5 11.8 8.8 12.2 8 12.2 C6.3 12.2 5.2 10.8 5 9 L13.3 9 L13.3 6.5Z M5.2 6.8 C5.5 5.2 6.5 4 8 4 C9.5 4 10.3 5.2 10.5 6.8Z" fill="#3aa0f0" stroke="#1a60c0" stroke-width="0.5"/><ellipse cx="8" cy="8" rx="7.5" ry="3.2" transform="rotate(-40 8 8)" fill="none" stroke="#8ad0ff" stroke-width="1.2"/></svg>
<svg style="left:141px;top:840px" width="16" height="16"><rect x="1" y="3" width="13" height="11" fill="#e0ecff" stroke="#2050a0" stroke-width="0.8"/><path d="M2 8 L8 4 L14 8" fill="none" stroke="#3a70d0" stroke-width="2"/><rect x="9" y="6" width="5" height="6" fill="#3a80e0"/></svg>
<svg style="left:164px;top:839px" width="18" height="17"><path d="M2 7 L9 4 L16 7 L16 14 L9 16 L2 14Z" fill="#f8e040" stroke="#907010" stroke-width="0.8"/><circle cx="6" cy="3" r="2" fill="#e02020"/><circle cx="12" cy="3" r="2" fill="#e02020"/><path d="M9 7 L9 16" stroke="#c09020"/></svg>
<svg style="left:187px;top:840px" width="16" height="16"><rect x="1" y="1" width="14" height="14" rx="3" fill="#d8ecff" stroke="#2060c0" stroke-width="1"/><path d="M4 8 A4 4 0 1 0 8 4" fill="none" stroke="#2a6ad0" stroke-width="2"/><path d="M8 8 L13 3" stroke="#204090" stroke-width="1.5"/></svg>
<svg style="left:210px;top:840px" width="16" height="16"><circle cx="8" cy="8" r="7" fill="#fff" stroke="#3060c0" stroke-width="1.2"/><circle cx="8" cy="8" r="5.5" fill="none" stroke="#f0a020" stroke-width="1" opacity="0.7"/><path d="M6 4.5 L12 8 L6 11.5Z" fill="#2050b0"/></svg>
<svg style="left:234px;top:841px" width="16" height="16"><circle cx="7.5" cy="7.5" r="5.5" fill="none" stroke="#5a9ae0" stroke-width="1.8" opacity="0.8"/><path d="M10 10 L14 14" stroke="#5a9ae0" stroke-width="1.8"/></svg>
<div class="a t" style="left:268px;top:833.15px;font-size:14px;color:#cfe0ff;font-weight:normal;">»</div>
<div class="a" style="left:295px;top:837px;width:142px;height:25px;border-radius:3px;background:linear-gradient(#4a8cf6,#3c81f3 4px,#3a7ef0 20px,#3473e6);box-shadow:inset 1px 1px 0 rgba(255,255,255,0.25), inset -1px -1px 0 rgba(0,0,80,0.35)"></div>
<div class="a t" style="left:322px;top:839.02px;font-size:11.5px;color:#dcdcdc;font-weight:bold">3</div>
<div class="a t" style="left:332px;top:839.02px;font-size:11.5px;color:#fff;font-weight:normal;">Esplora risorse</div>
<svg style="left:426px;top:847px" width="7" height="4"><path d="M0 0 H7 L3.5 4Z" fill="#fff"/></svg>
<div class="a" style="left:439px;top:837px;width:141px;height:25px;border-radius:3px;background:linear-gradient(#4a8cf6,#3c81f3 4px,#3a7ef0 20px,#3473e6);box-shadow:inset 1px 1px 0 rgba(255,255,255,0.25), inset -1px -1px 0 rgba(0,0,80,0.35)"></div>
<div class="a t" style="left:466px;top:839.02px;font-size:11.5px;color:#fff;font-weight:normal;">Use Original Xbox ...</div>
<div class="a" style="left:582px;top:837px;width:140px;height:25px;border-radius:3px;background:linear-gradient(#4a8cf6,#3c81f3 4px,#3a7ef0 20px,#3473e6);box-shadow:inset 1px 1px 0 rgba(255,255,255,0.25), inset -1px -1px 0 rgba(0,0,80,0.35)"></div>
<div class="a t" style="left:609px;top:839.02px;font-size:11.5px;color:#dcdcdc;font-weight:bold">6</div>
<div class="a t" style="left:619px;top:839.02px;font-size:11.5px;color:#fff;font-weight:normal;">Internet Explo...</div>
<svg style="left:711px;top:847px" width="7" height="4"><path d="M0 0 H7 L3.5 4Z" fill="#fff"/></svg>
<div class="a" style="left:724px;top:837px;width:141px;height:25px;border-radius:3px;background:linear-gradient(#4a8cf6,#3c81f3 4px,#3a7ef0 20px,#3473e6);box-shadow:inset 1px 1px 0 rgba(255,255,255,0.25), inset -1px -1px 0 rgba(0,0,80,0.35)"></div>
<div class="a t" style="left:751px;top:839.02px;font-size:11.5px;color:#fff;font-weight:normal;">Borsa - Outlook E...</div>
<div class="a" style="left:868px;top:837px;width:142px;height:25px;border-radius:3px;background:linear-gradient(#4a8cf6,#3c81f3 4px,#3a7ef0 20px,#3473e6);box-shadow:inset 1px 1px 0 rgba(255,255,255,0.25), inset -1px -1px 0 rgba(0,0,80,0.35)"></div>
<div class="a t" style="left:895px;top:839.02px;font-size:11.5px;color:#dcdcdc;font-weight:bold">3</div>
<div class="a t" style="left:905px;top:839.02px;font-size:11.5px;color:#fff;font-weight:normal;">READY</div>
<svg style="left:999px;top:847px" width="7" height="4"><path d="M0 0 H7 L3.5 4Z" fill="#fff"/></svg>
<svg style="left:303px;top:840px" width="14" height="18"><path d="M3 1 L11 1 L11 13 L3 13Z" fill="#6aaaf0" stroke="#c0d8f8" stroke-width="0.8"/><rect x="2" y="13" width="10" height="4" rx="1" fill="#d0d8e8"/></svg>
<svg style="left:446px;top:840px" width="18" height="18"><rect x="4" y="1" width="12" height="15" fill="#fff" stroke="#6a7ab0" stroke-width="0.8"/><rect x="1" y="3" width="10" height="9" fill="#2a4aa0"/><text x="2" y="11" font-size="9" font-weight="bold" fill="#fff" font-family="Liberation Sans">W</text><path d="M11 6 H15 M11 9 H15 M6 13 H15" stroke="#6a7ab0" stroke-width="0.8"/></svg>
<svg style="left:588px;top:840px" width="16" height="16"><path d="M13 6.5 C13 3.5 10.8 1.5 8 1.5 C4.5 1.5 2 4.5 2 8 C2 11.5 4.5 14.5 8 14.5 C10.5 14.5 12.3 13 13 11 L10 11 C9.5 11.8 8.8 12.2 8 12.2 C6.3 12.2 5.2 10.8 5 9 L13.3 9 L13.3 6.5Z M5.2 6.8 C5.5 5.2 6.5 4 8 4 C9.5 4 10.3 5.2 10.5 6.8Z" fill="#3aa0f0" stroke="#1a60c0" stroke-width="0.5"/><ellipse cx="8" cy="8" rx="7.5" ry="3.2" transform="rotate(-40 8 8)" fill="none" stroke="#8ad0ff" stroke-width="1.2"/></svg>
<svg style="left:731px;top:840px" width="18" height="16"><rect x="1" y="3" width="13" height="11" fill="#e0ecff" stroke="#2050a0" stroke-width="0.8"/><path d="M2 8 L8 4 L14 8" fill="none" stroke="#3a70d0" stroke-width="2"/><rect x="9" y="6" width="6" height="6" fill="#3a80e0"/></svg>
<svg style="left:876px;top:839px" width="16" height="18"><path d="M8 4 C3 3 1 7 3 11 C4.5 14 6.5 16 8 16 C9.5 16 11.5 14 13 11 C15 7 13 3 8 4Z" fill="#e02828" stroke="#901010" stroke-width="0.7"/><path d="M5 2 L8 4.5 L11 2" fill="none" stroke="#40a030" stroke-width="1.5"/></svg>
<div class="a" style="left:1023px;top:834px;width:129px;height:30px;background:linear-gradient(#22a0f8 0px,#1490ec 3px,#0e8ae6 14px,#0c86e2 28px,#0a70d0 33px);box-shadow:inset 1px 0 0 #1060c0, inset 2px 0 1px rgba(0,0,60,0.3)"></div>
<svg style="left:1015px;top:840px" width="18" height="18"><circle cx="9" cy="9" r="8.2" fill="#3a8af0" stroke="#d0e8ff" stroke-width="1"/><path d="M10.5 5 L6.5 9 L10.5 13" fill="none" stroke="#fff" stroke-width="2.2"/></svg>
<svg style="left:1034px;top:841px" width="14" height="16"><path d="M2 14 L4 6 L7 2 L9 5 L12 4 L10 9 L12 14Z" fill="#8a8a90" stroke="#404048" stroke-width="0.8"/></svg>
<svg style="left:1051px;top:840px" width="18" height="18"><rect x="0.5" y="0.5" width="17" height="17" fill="#fff" stroke="#1a1a1a"/><text x="1.2" y="11" font-size="11" font-weight="bold" fill="#000" font-family="Liberation Sans" textLength="15.5" lengthAdjust="spacingAndGlyphs">438</text><rect x="2" y="13" width="6" height="3" fill="#20c020"/><rect x="9" y="13" width="7" height="3" fill="#f8f0c8"/></svg>
<svg style="left:1070px;top:840px" width="17" height="17"><circle cx="8.5" cy="8.5" r="8" fill="#2a3a5a"/><circle cx="7" cy="6.5" r="4" fill="#8a9ab8" opacity="0.6"/><text x="5" y="13" font-size="12" font-weight="bold" fill="#fff" font-family="Liberation Sans">a</text></svg>
<svg style="left:1087px;top:839px" width="17" height="17"><rect x="1" y="6" width="8" height="7" fill="#b0d8ff" stroke="#3a6ab0" stroke-width="0.8"/><rect x="7" y="1" width="9" height="7" fill="#b0d8ff" stroke="#3a6ab0" stroke-width="0.8"/><rect x="3" y="13" width="4" height="3" fill="#d0d8e0"/></svg>
<div class="a t" style="left:1113px;top:839.02px;font-size:11.5px;color:#fff;font-weight:normal;">0.25</div>
</body></html>
